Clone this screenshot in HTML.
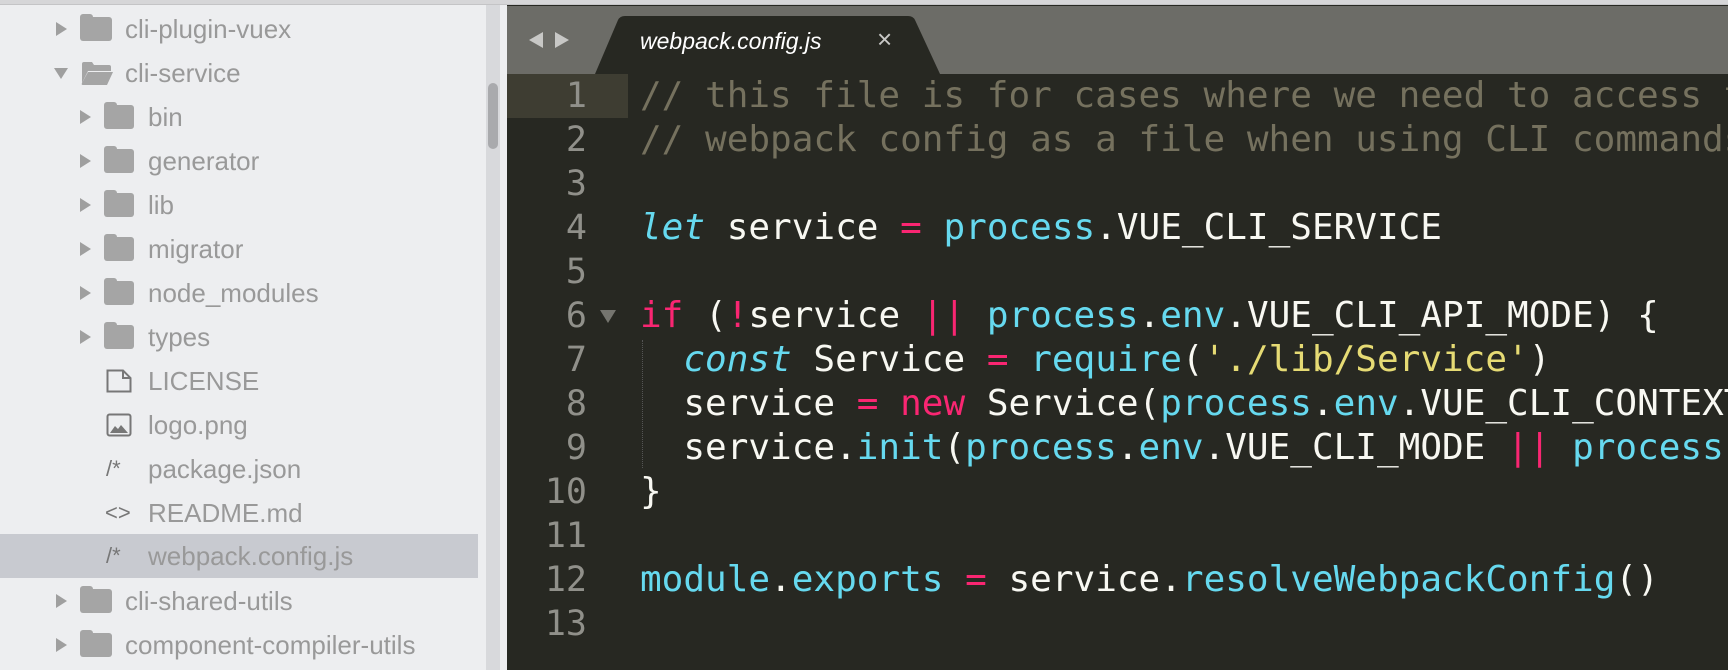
<!DOCTYPE html>
<html><head><meta charset="utf-8"><style>
*{margin:0;padding:0;box-sizing:border-box}
body{width:1728px;height:670px;overflow:hidden;background:#272822;position:relative;font-family:"Liberation Sans",sans-serif}
#top{position:absolute;left:0;top:0;width:1728px;height:5px;background:#d6d6d8;border-bottom:1px solid #c4c4c6}
#side{position:absolute;left:0;top:5px;width:507px;height:665px;background:#edeef0}
.row{position:absolute;left:0;height:44px;width:478px;font-size:26px;color:#999;line-height:44px}
.row span{position:absolute;top:0}
.sel{background:#c8cad0}
.arr{position:absolute;width:0;height:0;border-top:7px solid transparent;border-bottom:7px solid transparent;border-left:11px solid #9f9f9f;top:15px}
.down{position:absolute;width:0;height:0;border-left:7px solid transparent;border-right:7px solid transparent;border-top:11px solid #9f9f9f;top:17px}
.fold{position:absolute;top:10px;width:32px;height:24px;background:#a5a5a5;border-radius:3px}
.fold:before{content:"";position:absolute;left:0;top:-3px;width:13px;height:6px;background:#a5a5a5;border-radius:3px 3px 0 0}
.ic{position:absolute;color:#777;font-size:22px}
#track{position:absolute;left:486px;top:0;width:14px;height:665px;background:#d8d9dc}
#thumb{position:absolute;left:488px;top:78px;width:10px;height:66px;background:#a9aaad;border-radius:5px}
#tabbar{position:absolute;left:507px;top:6px;width:1221px;height:68px;background:#6c6c67}
#code{position:absolute;left:507px;top:74px;width:1221px;height:596px;background:#272822;font-family:"DejaVu Sans Mono",monospace;font-size:36px;white-space:pre;color:#f8f8f2}
.ln{position:absolute;left:0;width:80px;text-align:right;height:44px;line-height:44px;color:#90908a;font-size:35px}
.cl{position:absolute;left:133px;height:44px;line-height:44px}
.c{color:#75715e}.k{color:#66d9ef;font-style:italic}.b{color:#66d9ef}.p{color:#f92672}.s{color:#e6db74}
</style></head><body>
<div id="top"></div>
<div id="side">
<div id="track"></div><div id="thumb"></div>
</div>
<div id="rows" style="position:absolute;left:0;top:0">
<div class="row" style="top:7px"><i class="arr" style="left:56px"></i><i class="fold" style="left:80px"></i><span style="left:125px">cli-plugin-vuex</span></div>
<div class="row" style="top:51px"><i class="down" style="left:54px"></i><svg style="position:absolute;left:80px;top:10px" width="34" height="25" viewBox="0 0 34 25"><path d="M2 3 Q2 1 4 1 H12 L14 4 H29 Q31 4 31 6 V10 H8 L2 22 Z" fill="#a5a5a5"/><path d="M8 11 H33 L27 24 H3 Q1 24 2 22 Z" fill="#a5a5a5"/></svg><span style="left:125px">cli-service</span></div>
<div class="row" style="top:95px"><i class="arr" style="left:80px"></i><i class="fold" style="left:104px;width:30px"></i><span style="left:148px">bin</span></div>
<div class="row" style="top:139px"><i class="arr" style="left:80px"></i><i class="fold" style="left:104px;width:30px"></i><span style="left:148px">generator</span></div>
<div class="row" style="top:183px"><i class="arr" style="left:80px"></i><i class="fold" style="left:104px;width:30px"></i><span style="left:148px">lib</span></div>
<div class="row" style="top:227px"><i class="arr" style="left:80px"></i><i class="fold" style="left:104px;width:30px"></i><span style="left:148px">migrator</span></div>
<div class="row" style="top:271px"><i class="arr" style="left:80px"></i><i class="fold" style="left:104px;width:30px"></i><span style="left:148px">node_modules</span></div>
<div class="row" style="top:315px"><i class="arr" style="left:80px"></i><i class="fold" style="left:104px;width:30px"></i><span style="left:148px">types</span></div>
<div class="row" style="top:359px"><svg style="position:absolute;left:106px;top:10px" width="26" height="24"><path d="M1.5 1.5 H17 L24.5 9 V22.5 H1.5 Z M17 1.5 V9 H24.5" fill="none" stroke="#777" stroke-width="2"/></svg><span style="left:148px">LICENSE</span></div>
<div class="row" style="top:403px"><svg style="position:absolute;left:106px;top:10px" width="26" height="24"><rect x="1.5" y="1.5" width="23" height="21" rx="2" fill="none" stroke="#777" stroke-width="2"/><path d="M4 20 L9 13 L12 16 L15 12 L22 20 Z" fill="#777"/></svg><span style="left:148px">logo.png</span></div>
<div class="row" style="top:447px"><span class="ic" style="left:106px">/*</span><span style="left:148px">package.json</span></div>
<div class="row" style="top:491px"><span class="ic" style="left:105px">&lt;&gt;</span><span style="left:148px">README.md</span></div>
<div class="row sel" style="top:534px"><span class="ic" style="left:106px">/*</span><span style="left:148px">webpack.config.js</span></div>
<div class="row" style="top:579px"><i class="arr" style="left:56px"></i><i class="fold" style="left:80px"></i><span style="left:125px">cli-shared-utils</span></div>
<div class="row" style="top:623px"><i class="arr" style="left:56px"></i><i class="fold" style="left:80px"></i><span style="left:125px">component-compiler-utils</span></div>
</div>
<div id="tabbar">
<svg style="position:absolute;left:22px;top:26px" width="46" height="18"><path d="M0 8 L14 0 V16 Z" fill="#c8c8c6"/><path d="M26 0 L40 8 L26 16 Z" fill="#c8c8c6"/></svg>
<svg style="position:absolute;left:88px;top:10px" width="348" height="58"><path d="M0 58 L23 4 Q25 0 30 0 H313 Q318 0 320 4 L345 58 Z" fill="#272822"/></svg>
<div style="position:absolute;left:133px;top:20px;font-size:23px;font-style:italic;color:#fff;line-height:30px">webpack.config.js</div>
<div style="position:absolute;left:370px;top:18px;font-size:26px;color:#c8c8c6;line-height:30px">×</div>
</div>
<div id="code">
<div style="position:absolute;left:0;top:0;width:121px;height:44px;background:#3e3d32"></div>
<div style="position:absolute;left:135px;top:266px;width:0;height:128px;border-left:1px dotted #555"></div>
<div class="ln" style="top:0">1</div><div class="ln" style="top:44px">2</div><div class="ln" style="top:88px">3</div><div class="ln" style="top:132px">4</div><div class="ln" style="top:176px">5</div><div class="ln" style="top:220px">6</div><div class="ln" style="top:264px">7</div><div class="ln" style="top:308px">8</div><div class="ln" style="top:352px">9</div><div class="ln" style="top:396px">10</div><div class="ln" style="top:440px">11</div><div class="ln" style="top:484px">12</div><div class="ln" style="top:528px">13</div>
<svg style="position:absolute;left:93px;top:236px" width="16" height="14"><path d="M0 0 H16 L8 13 Z" fill="#75756f"/></svg>
<div class="cl c" style="top:0">// this file is for cases where we need to access the</div>
<div class="cl c" style="top:44px">// webpack config as a file when using CLI commands</div>
<div class="cl" style="top:132px"><span class="k">let</span> service <span class="p">=</span> <span class="b">process</span>.VUE_CLI_SERVICE</div>
<div class="cl" style="top:220px"><span class="p">if</span> (<span class="p">!</span>service <span class="p">||</span> <span class="b">process</span>.<span class="b">env</span>.VUE_CLI_API_MODE) {</div>
<div class="cl" style="top:264px">  <span class="k">const</span> Service <span class="p">=</span> <span class="b">require</span>(<span class="s">'./lib/Service'</span>)</div>
<div class="cl" style="top:308px">  service <span class="p">=</span> <span class="p">new</span> Service(<span class="b">process</span>.<span class="b">env</span>.VUE_CLI_CONTEXT</div>
<div class="cl" style="top:352px">  service.<span class="b">init</span>(<span class="b">process</span>.<span class="b">env</span>.VUE_CLI_MODE <span class="p">||</span> <span class="b">process</span></div>
<div class="cl" style="top:396px">}</div>
<div class="cl" style="top:484px"><span class="b">module</span>.<span class="b">exports</span> <span class="p">=</span> service.<span class="b">resolveWebpackConfig</span>()</div>
</div>
</body></html>
